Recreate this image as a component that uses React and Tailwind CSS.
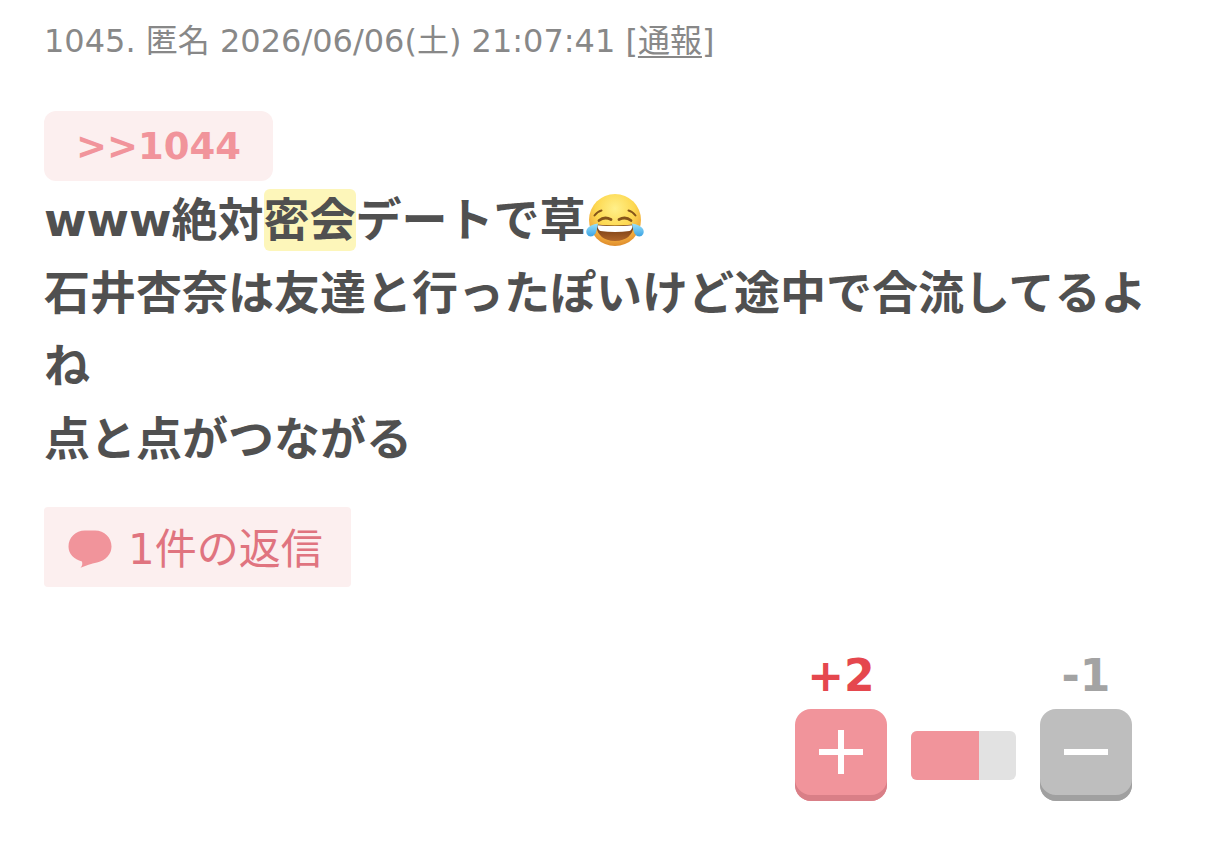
import React, { useState } from "react";

function JoyEmoji() {
  return (
    <svg
      role="img"
      aria-label="😂"
      viewBox="0 0 58 54"
      className="inline-block w-[58px] h-[54px] align-[-11px]"
    >
      <defs>
        <radialGradient id="face" cx="50%" cy="28%" r="75%">
          <stop offset="0" stopColor="#fff08a" />
          <stop offset="0.5" stopColor="#fdd850" />
          <stop offset="0.82" stopColor="#eea53a" />
          <stop offset="1" stopColor="#d98428" />
        </radialGradient>
        <linearGradient id="mouth" x1="0" y1="0" x2="0" y2="1">
          <stop offset="0" stopColor="#6b3410" />
          <stop offset="1" stopColor="#b0662a" />
        </linearGradient>
        <linearGradient id="tear" x1="0" y1="0" x2="0" y2="1">
          <stop offset="0" stopColor="#9be2fb" />
          <stop offset="1" stopColor="#3ba3e3" />
        </linearGradient>
      </defs>
      <circle cx="29" cy="27" r="26" fill="url(#face)" />
      <g fill="none" stroke="#85541a" strokeLinecap="round">
        <path d="M8.500 22.500Q11.500 18.500 15.500 17.500" strokeWidth="2" />
        <path d="M42.500 17.500Q46.500 18.500 49.500 22.500" strokeWidth="2" />
        <path d="M13 27.500Q18.500 23 25 26.500" strokeWidth="2.800" />
        <path d="M33 26.500Q39.500 23 45 27.500" strokeWidth="2.800" />
      </g>
      <path d="M10 31.500Q29 33.500 48 31.500Q46.500 47.500 29 48Q11.500 47.500 10 31.500Z" fill="url(#mouth)" />
      <path d="M11.500 32.200Q29 34 46.500 32.200Q46.500 36.500 43.500 38Q29 40 14.500 38Q11.500 36.500 11.500 32.200Z" fill="#fff" />
      <path d="M12 30.500Q4 31.500 1 36Q-1 40.500 2.500 43Q7 44.500 9.500 40.500Q11.300 36.500 12 30.500Z" fill="url(#tear)" />
      <path d="M46 30.500Q54 31.500 57 36Q59 40.500 55.500 43Q51 44.500 48.500 40.500Q46.700 36.500 46 30.500Z" fill="url(#tear)" />
    </svg>
  );
}

function BubbleIcon() {
  return (
    <svg viewBox="0 0 44 38" className="w-11 h-[38px] fill-[#f1949b]" aria-hidden="true">
      <path d="M17 0.500H27C36.500 0.500 43.500 7.500 43.500 16.500C43.500 24 38 30.500 29 32.500C23 33.500 18 36 12.500 37.800C14.500 35.500 14.500 34 14 31.500C6 29.500 0.500 24 0.500 16.500C0.500 7.500 7.500 0.500 17 0.500Z" />
    </svg>
  );
}

export default function App() {
  const [vote, setVote] = useState(null);

  return (
    <article className="px-11 pt-[17px] pb-8 bg-white font-['DejaVu_Sans','Noto_Sans_CJK_JP',sans-serif]">
      <header className="text-[32px] leading-[48px] text-[#888888]">
        1045. 匿名 2026/06/06(土) 21:07:41 [
        <a href="#report" className="underline underline-offset-4 decoration-2">
          通報
        </a>
        ]
      </header>

      <div className="mt-[46px] text-[46px] leading-[73px] font-bold text-[#505050]">
        <a
          href="#comment-1044"
          className="block w-fit h-[70px] mb-[3px] px-8 rounded-xl bg-[#fcefef] text-[37px] leading-[72px] text-[#f1949b]"
        >
          &gt;&gt;1044
        </a>
        <p>
          www絶対
          <mark className="py-1 rounded-md bg-[#fdf6ba] text-inherit">密会</mark>
          デートで草
          <JoyEmoji />
        </p>
        <p>石井杏奈は友達と行ったぽいけど途中で合流してるよね</p>
        <p>点と点がつながる</p>
      </div>

      <button className="mt-[31px] h-20 pt-2 pb-1 pl-6 pr-7 flex items-center gap-4 rounded-sm bg-[#fcefef] text-[42px] text-[#e0747f]">
        <BubbleIcon />
        <span>1件の返信</span>
      </button>

      <footer className="mt-16 mr-[30px] flex justify-end items-end gap-6 text-[44px] leading-[50px] font-bold">
        <div className="w-[92px] flex flex-col items-center gap-2">
          <span className="text-[#e5474e]">+2</span>
          <button
            aria-label="プラス"
            aria-pressed={vote === "plus"}
            onClick={() => setVote("plus")}
            className="w-full h-[92px] pb-1.5 flex items-center justify-center rounded-2xl bg-[#f1949b] shadow-[inset_0_-6px_0_#d97f87]"
          >
            <svg viewBox="0 0 44 44" className="w-11 h-11 fill-white" aria-hidden="true">
              <path d="M19 0h6v19h19v6H25v19h-6V25H0v-6h19z" />
            </svg>
          </button>
        </div>

        <div className="w-[105px] h-[49px] mb-[21px] rounded-md overflow-hidden bg-[#e2e2e2]">
          <div className="w-[65%] h-full bg-[#f1949b]" />
        </div>

        <div className="w-[92px] flex flex-col items-center gap-2">
          <span className="text-[#a3a3a3]">-1</span>
          <button
            aria-label="マイナス"
            aria-pressed={vote === "minus"}
            onClick={() => setVote("minus")}
            className="w-full h-[92px] pb-1.5 flex items-center justify-center rounded-2xl bg-[#bebebe] shadow-[inset_0_-6px_0_#a0a0a0]"
          >
            <svg viewBox="0 0 44 44" className="w-11 h-11 fill-white" aria-hidden="true">
              <path d="M0 19h44v6H0z" />
            </svg>
          </button>
        </div>
      </footer>
    </article>
  );
}
